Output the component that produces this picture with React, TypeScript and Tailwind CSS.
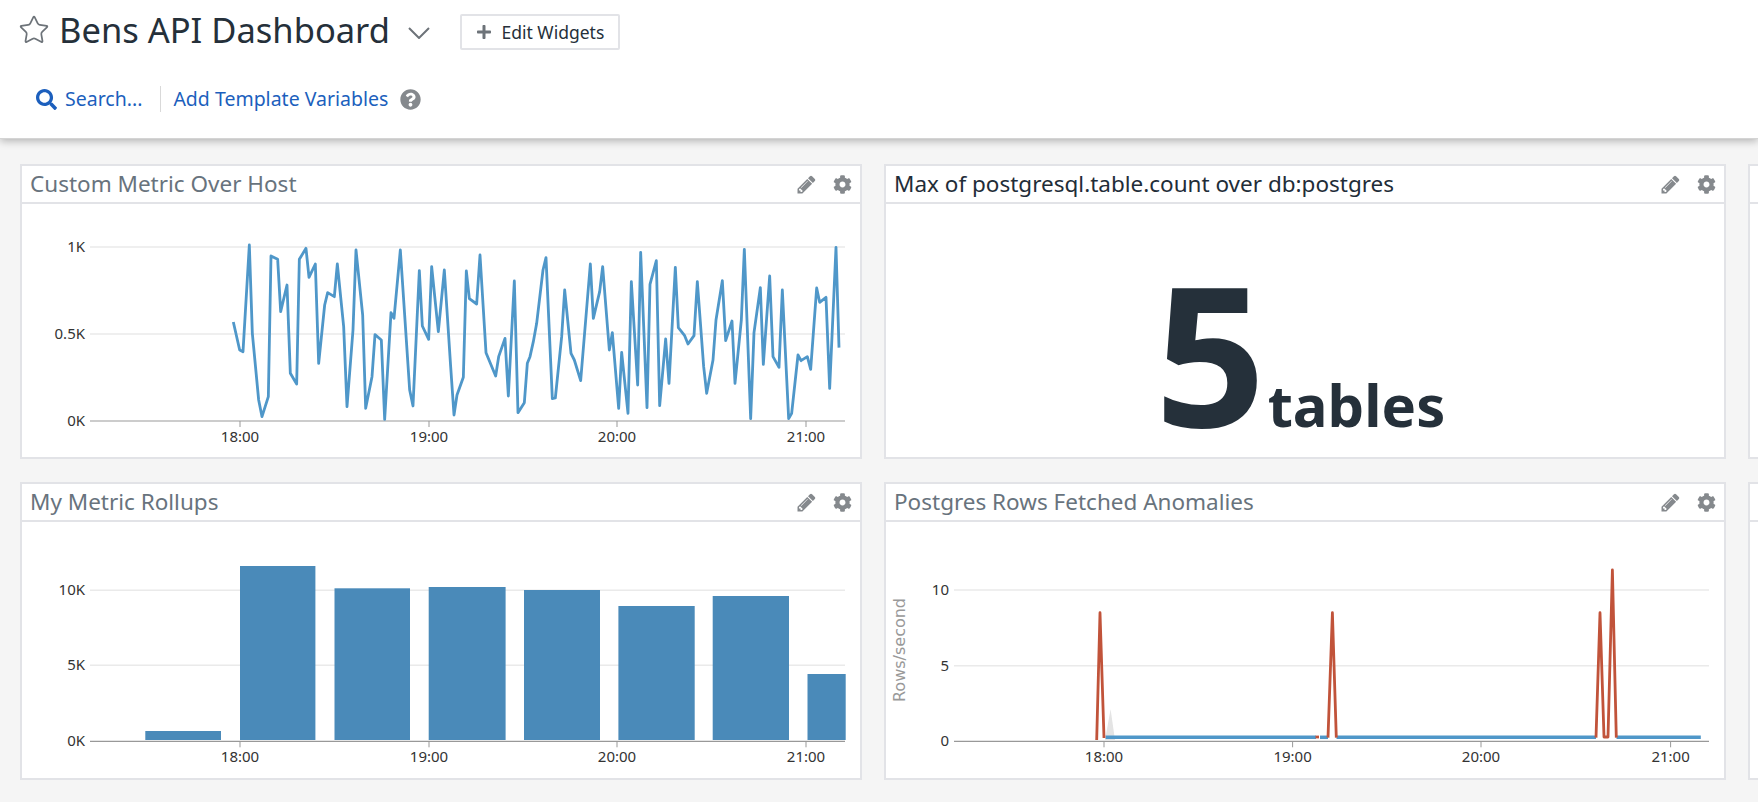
import React from 'react';
import { Star } from 'lucide-react';
import { FaCog, FaPlus, FaQuestionCircle, FaSearch } from 'react-icons/fa';

const FONT = { fontFamily: '"Noto Sans", sans-serif' };

// Trace of the line chart, page coordinates x3 (two stretches, each from its own left edge)
const LINE_A = [
  [100,306],[119,390],[129,395],[148,75],[157,340],[176,540],[186,590],[205,530],[213,108],[233,118],[242,275],[261,195],
  [271,460],[290,492],[298,118],[318,85],[327,172],[346,132],[356,430],[374,255],[383,218],[403,230],[412,132],[431,320],
  [441,560],[459,330],[468,90],[488,285],[497,565],[516,470],[525,344],[544,360],[554,598],[573,278],[582,295],[601,90],
  [629,510],[639,558],[658,152],[667,318],[686,358],[695,140],[715,335],[733,150],[752,440],[762,585],[771,525],[790,472],
  [799,153],[808,236],[830,252],[840,105],[858,398],[887,468],[896,410],[915,355],[925,528],[943,183],[954,578],[973,548],
  [982,430],
];
const LINE_B = [
  [0,410],[10,365],[20,310],[39,150],[48,113],[67,536],[76,534],[95,350],[104,210],[123,400],[133,420],[152,482],[181,132],
  [190,295],[209,215],[218,140],[238,390],[247,338],[266,565],[275,397],[294,580],[304,185],[323,495],[332,97],[351,563],
  [360,193],[379,122],[389,557],[407,357],[417,490],[436,142],[445,323],[464,347],[474,372],[492,347],[502,185],[521,440],
  [530,520],[549,420],[558,300],[577,182],[587,362],[606,303],[615,490],[634,300],[643,88],[662,596],[672,338],[691,203],
  [700,433],[719,168],[729,410],[747,442],[757,210],[776,596],[785,580],[804,405],[813,422],[832,410],[842,448],[860,204],
  [869,247],[888,232],[899,505],[918,82],[927,383],
];
const linePoints = [
  ...LINE_A.map(([x, y]) => `${200 + x / 3},${220 + y / 3}`),
  ...LINE_B.map(([x, y]) => `${530 + x / 3},${220 + y / 3}`),
].join(' ');

const BARS = [
  { x: 145.3, w: 75.7, top: 731 },
  { x: 240, w: 75.4, top: 566 },
  { x: 334.5, w: 75.5, top: 588.3 },
  { x: 428.7, w: 76.9, top: 587 },
  { x: 524, w: 76, top: 590 },
  { x: 618.4, w: 76.3, top: 606 },
  { x: 712.7, w: 76.3, top: 596 },
  { x: 807.5, w: 38.2, top: 674 },
];

const HOURS = ['18:00', '19:00', '20:00', '21:00'];

type AxisProps = {
  left: number;
  right: number;
  base: number;
  zero: string;
  ticks: number[];
  grid: { label: string; y: number }[];
};

function Axis({ left, right, base, zero, ticks, grid }: AxisProps) {
  return (
    <g style={FONT} fontSize="15" fill="#333">
      {grid.map((g) => (
        <g key={g.label}>
          <line x1={left} x2={right} y1={g.y} y2={g.y} stroke="#eaeaea" strokeWidth="1.5" />
          <text x={left - 5} y={g.y + 5} textAnchor="end">{g.label}</text>
        </g>
      ))}
      <line x1={left} x2={right} y1={base} y2={base} stroke="#999" strokeWidth="1.2" />
      <text x={left - 5} y={base + 5} textAnchor="end">{zero}</text>
      {ticks.map((t, i) => (
        <g key={t}>
          <line x1={t} x2={t} y1={base} y2={base + 6} stroke="#999" />
          <text x={t} y={base + 21} textAnchor="middle">{HOURS[i]}</text>
        </g>
      ))}
    </g>
  );
}

function PencilIcon() {
  return (
    <svg className="w-[21px] h-[21px]" viewBox="0 0 1792 1792" fill="currentColor">
      <path d="M491 1536l91-91-235-235-91 91v107h128v128h107zm523-928q0-22-22-22-10 0-17 7l-542 542q-7 7-7 17 0 22 22 22 10 0 17-7l542-542q7-7 7-17zm-54-192l416 416-832 832h-416v-416zm683 96q0 53-37 90l-166 166-416-416 166-165q36-38 90-38 53 0 91 38l235 234q37 39 37 91z" />
    </svg>
  );
}

function Card({ title, dark, height, children }: { title?: string; dark?: boolean; height: string; children?: React.ReactNode }) {
  return (
    <div className={`w-[842px] shrink-0 flex flex-col border-2 border-[#e2e3e7] bg-white ${height}`}>
      <div className="h-[36px] shrink-0 flex items-center justify-between pl-2 pr-[8px]">
        <span className={`text-[22.5px] leading-none ${dark ? 'text-[#1f2d38]' : 'text-[#68737d]'}`}>{title}</span>
        <span className="flex items-center gap-[16px] text-[#85898d]">
          <PencilIcon />
          <FaCog className="w-[19px] h-[19px]" />
        </span>
      </div>
      <div className="flex-1 min-h-0 border-t-2 border-[#e2e3e7]">{children}</div>
    </div>
  );
}

function CustomMetricChart() {
  return (
    <svg className="block w-full h-full" viewBox="22 204 838 253">
      <Axis left={90} right={845} base={421} zero="0K" ticks={[240, 429, 617, 806]} grid={[{ label: '1K', y: 247 }, { label: '0.5K', y: 334 }]} />
      <polyline points={linePoints} fill="none" stroke="#4f97c9" strokeWidth="2.8" strokeLinejoin="round" />
    </svg>
  );
}

function RollupsChart() {
  return (
    <svg className="block w-full h-full" viewBox="22 522 838 256">
      <Axis left={90} right={845} base={741.3} zero="0K" ticks={[240, 429, 617, 806]} grid={[{ label: '10K', y: 590.3 }, { label: '5K', y: 665.3 }]} />
      {BARS.map((b) => (
        <rect key={b.x} x={b.x} y={b.top} width={b.w} height={740 - b.top} fill="#4a8ab9" />
      ))}
    </svg>
  );
}

function AnomaliesChart() {
  return (
    <svg className="block w-full h-full" viewBox="886 522 838 256">
      <Axis left={954} right={1709} base={741.3} zero="0" ticks={[1104, 1292.6, 1481, 1670.6]} grid={[{ label: '10', y: 590 }, { label: '5', y: 665.7 }]} />
      <text transform="translate(905 650) rotate(-90)" textAnchor="middle" fontSize="16" fill="#999" style={{ fontFamily: '"DejaVu Sans", sans-serif' }}>Rows/second</text>
      <polygon points="1105,740 1110.6,709.3 1115,740" fill="#e4e4e4" />
      <g stroke="#4f97c9" strokeWidth="3.5">
        <line x1="1105.6" x2="1316" y1="737.3" y2="737.3" />
        <line x1="1320" x2="1328" y1="737.3" y2="737.3" />
        <line x1="1336.5" x2="1596" y1="737.3" y2="737.3" />
        <line x1="1616.5" x2="1700.8" y1="737.3" y2="737.3" />
      </g>
      <g fill="none" stroke="#c1533a" strokeWidth="2.8" strokeLinejoin="round">
        <polyline points="1096.7,740 1100,612.7 1104,738" />
        <polyline points="1315.5,737 1319,737" />
        <polyline points="1328,737.6 1332.4,612.7 1336.3,737.6" />
        <polyline points="1596,737.6 1600,612.7 1604,737 1608,737 1612.4,570 1616.3,737.6" />
      </g>
    </svg>
  );
}

export default function App() {
  return (
    <div className="h-screen overflow-hidden flex flex-col bg-[#f5f5f5]" style={FONT}>
      {/* Top bar */}
      <header className="h-[139px] shrink-0 bg-white border-b border-[#d4d4d4] shadow-[0_2px_8px_rgba(0,0,0,0.28)] relative z-10 flex flex-col">
        <div className="flex items-center pl-[18px] h-[60px]">
          <Star className="w-[32px] h-[32px] text-[#6d7379]" strokeWidth={1.3} />
          <h1 className="ml-[9px] text-[34.5px] leading-none text-[#25303a]">Bens API Dashboard</h1>
          <svg className="ml-[18px] mt-[6px] text-[#6d7379]" width="22" height="12" viewBox="0 0 22 12" fill="none" stroke="currentColor" strokeWidth="2">
            <path d="M1 1l10 10L21 1" />
          </svg>
          <button className="ml-[30px] mt-[4px] h-[36px] w-[160px] flex items-center justify-center gap-[10px] border-2 border-[#e2e3e7] rounded-[2px] text-[17.5px] text-[#25303a]">
            <FaPlus className="w-[16px] h-[16px] text-[#6d7379]" />
            Edit Widgets
          </button>
        </div>
        <div className="flex items-center mt-[26px] pl-[36px] h-[26px] text-[19.5px] text-[#1c5fbd]">
          <FaSearch className="w-[21px] h-[21px]" />
          <span className="ml-[8px]">Search...</span>
          <span className="ml-[18px] h-[26px] w-px bg-[#d9d9d9]" />
          <span className="ml-[12px]">Add Template Variables</span>
          <FaQuestionCircle className="ml-[12px] w-[21px] h-[21px] text-[#85898d]" />
        </div>
      </header>

      {/* Widgets */}
      <main className="pt-[25px] pl-5 flex flex-col gap-[23px] overflow-hidden">
        <div className="flex gap-[22px]">
          <Card title="Custom Metric Over Host" height="h-[295px]">
            <CustomMetricChart />
          </Card>
          <Card title="Max of postgresql.table.count over db:postgres" dark height="h-[295px]">
            <div className="h-full flex items-baseline justify-center pt-[22px] pr-[10px] text-[#25303a] font-bold">
              <span className="text-[194px] leading-[252px]">5</span>
              <span className="ml-[2px] text-[58px] leading-none">tables</span>
            </div>
          </Card>
          <Card height="h-[295px]" />
        </div>
        <div className="flex gap-[22px]">
          <Card title="My Metric Rollups" height="h-[298px]">
            <RollupsChart />
          </Card>
          <Card title="Postgres Rows Fetched Anomalies" height="h-[298px]">
            <AnomaliesChart />
          </Card>
          <Card height="h-[298px]" />
        </div>
      </main>
    </div>
  );
}
